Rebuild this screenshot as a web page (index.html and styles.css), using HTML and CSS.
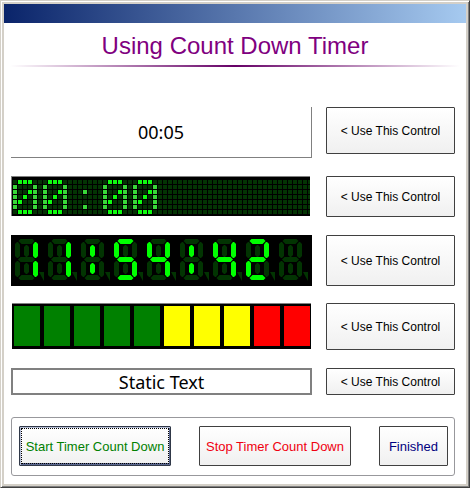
FILE: index.html
```html
<!DOCTYPE html>
<html lang="en">
<head>
  <meta charset="UTF-8">
  <meta name="viewport" content="width=device-width, initial-scale=1">
  <title>Using Count Down Timer</title>
  <link rel="stylesheet" href="styles.css">
</head>
<body>
  <div class="window">
    <div class="client">
      <div class="title-bar"></div>
      <h1>Using Count Down Timer</h1>
      <div class="rule"></div>

      <main>
        <div class="controls">
          <div class="display sunken">00:05</div>
          <button type="button" class="use use-1">&lt; Use This Control</button>

          <!-- dot matrix: 7 rows, one dot every 5px -->
          <div class="display matrix">
            <svg width="100%" height="39" role="img" aria-label="00:00">
              <defs>
                <pattern id="dots" x="1" y="3" width="5" height="5" patternUnits="userSpaceOnUse">
                  <rect width="4" height="4" fill="#033403"/>
                </pattern>
                <g id="zero">
                  <path class="dot" d="M5 2h14M5 32h14M15 12h4M10 17h4M5 22h4"/>
                  <path class="dot side" d="M0 7h4M0 12h4M0 17h4M0 22h4M0 27h4M20 7h4M20 12h4M20 17h4M20 22h4M20 27h4"/>
                </g>
              </defs>
              <rect x="1" y="3" width="100%" height="34" fill="url(#dots)"/>
              <use href="#zero" x="1" y="3"/>
              <use href="#zero" x="31" y="3"/>
              <path class="dot side" d="M71 15h4M71 30h4"/>
              <use href="#zero" x="91" y="3"/>
              <use href="#zero" x="121" y="3"/>
              <!-- gaps between the dots of the top and bottom strokes -->
              <path class="grid" d="M10.5 3v34M15.5 3v34M40.5 3v34M45.5 3v34M100.5 3v34M105.5 3v34M130.5 3v34M135.5 3v34"/>
            </svg>
          </div>
          <button type="button" class="use use-2">&lt; Use This Control</button>

          <!-- seven segment display: nine places, 33px apart -->
          <div class="display segments">
            <svg width="100%" height="51" role="img" aria-label="11:54:42">
              <defs>
                <path id="a" d="M3.5 2L5.500 0H17.500L19.500 2L16.500 5H6.500Z"/>
                <path id="b" d="M20 3H21L23 5V17L21 19H20L18 17V5.500Z"/>
                <path id="c" d="M20 22H21L23 24V36L21 38H20L18 35.500V24Z"/>
                <path id="d" d="M6.500 36H16.500L19.500 39L17.500 41H5.500L3.500 39Z"/>
                <path id="e" d="M2 22H3L5 24V35.500L3 38H2L0 36V24Z"/>
                <path id="f" d="M2 3H3L5 5.500V17L3 19H2L0 17V5Z"/>
                <path id="g" d="M3 20.500L5.500 18H17.500L20 20.500L17.500 23H5.500Z"/>
                <path id="colon" d="M9 8L11 6H12L14 8V16L12 18H11L9 16ZM9 26L11 24H12L14 26V33L12 35H11L9 33Z"/>
                <g id="off">
                  <use href="#a"/><use href="#b"/><use href="#c"/><use href="#d"/>
                  <use href="#e"/><use href="#f"/><use href="#g"/><use href="#colon"/>
                  <path d="M24 33H29V42Z"/>
                </g>
              </defs>
              <g class="unlit">
                <use href="#off" x="4" y="4"/>
                <use href="#off" x="37" y="4"/>
                <use href="#off" x="70" y="4"/>
                <use href="#off" x="103" y="4"/>
                <use href="#off" x="136" y="4"/>
                <use href="#off" x="169" y="4"/>
                <use href="#off" x="202" y="4"/>
                <use href="#off" x="235" y="4"/>
                <use href="#off" x="268" y="4"/>
              </g>
              <g class="lit">
                <g transform="translate(4 4)"><use href="#b"/><use href="#c"/></g>
                <g transform="translate(37 4)"><use href="#b"/><use href="#c"/></g>
                <use href="#colon" x="70" y="4"/>
                <g transform="translate(103 4)"><use href="#a"/><use href="#f"/><use href="#g"/><use href="#c"/><use href="#d"/></g>
                <g transform="translate(136 4)"><use href="#f"/><use href="#g"/><use href="#b"/><use href="#c"/></g>
                <use href="#colon" x="169" y="4"/>
                <g transform="translate(202 4)"><use href="#f"/><use href="#g"/><use href="#b"/><use href="#c"/></g>
                <g transform="translate(235 4)"><use href="#a"/><use href="#b"/><use href="#g"/><use href="#e"/><use href="#d"/></g>
              </g>
            </svg>
          </div>
          <button type="button" class="use use-3">&lt; Use This Control</button>

          <div class="display meter">
            <span class="green"></span>
            <span class="green"></span>
            <span class="green"></span>
            <span class="green"></span>
            <span class="green"></span>
            <span class="yellow"></span>
            <span class="yellow"></span>
            <span class="yellow"></span>
            <span class="red"></span>
            <span class="red"></span>
          </div>
          <button type="button" class="use use-1">&lt; Use This Control</button>

          <div class="display static">Static Text</div>
          <button type="button" class="use use-5">&lt; Use This Control</button>
        </div>

        <div class="actions">
          <button type="button" class="action start">Start Timer Count Down</button>
          <button type="button" class="action stop">Stop Timer Count Down</button>
          <button type="button" class="action finished">Finished</button>
        </div>
      </main>
    </div>
  </div>
</body>
</html>
```

FILE: styles.css
```css
* {
  box-sizing: border-box;
}

body {
  margin: 0;
  font-family: "Liberation Sans", Arial, sans-serif;
  color: #000;
}

/* raised window frame */
.window {
  display: flex;
  min-height: 100vh;
  padding: 3px;
  background: #d4d0c8;
  border: 1px solid #d4d0c8;
  border-right-color: #404040;
  border-bottom-color: #404040;
  box-shadow: inset 1px 1px #fff, inset -1px -1px #808080;
}

.client {
  flex: 1;
  background: #fff;
}

.title-bar {
  height: 19px;
  background: linear-gradient(to right, #0a246a, #a6caf0);
}

h1 {
  margin: 0;
  padding-top: 4px;
  font-size: 24px;
  font-weight: normal;
  line-height: 38px;
  text-align: center;
  color: #800080;
}

.rule {
  height: 2px;
  margin: 0 6px;
  background: linear-gradient(to right, #fff, #660066, #fff);
}

main {
  padding: 40px 11px 8px 7px;
}

.controls {
  display: grid;
  grid-template-columns: 1fr 129px;
  grid-template-rows: 52px 42px 51px 48px 27px;
  gap: 17px 14px;
  align-items: start;
}

.display {
  overflow: hidden;
}

.display svg {
  display: block;
}

.sunken,
.static {
  font-family: "Noto Sans", Tahoma, sans-serif;
  font-size: 18px;
  text-align: center;
}

.sunken {
  height: 51px;
  line-height: 50px;
  border-right: 1px solid #808080;
  border-bottom: 1px solid #808080;
}

.matrix {
  height: 40px;
  margin-right: 2px;
  background: #000;
  border-top: 1px solid #808080;
  border-left: 1px solid #808080;
}

.dot {
  stroke: #10fb10;
  stroke-width: 4;
}

.side {
  stroke: #38d838;
}

.grid {
  stroke: #000;
  stroke-width: 1;
}

.segments {
  height: 51px;
  background: #000;
}

.unlit {
  fill: #023402;
}

.lit {
  fill: #0f0;
}

.meter {
  display: flex;
  gap: 4px;
  height: 46px;
  margin: 0 1px;
  padding: 2px 1px 3px 2px;
  background: #000;
  border-top: 1px solid #808080;
}

.meter span {
  flex: 1;
}

.green {
  background: #008000;
}

.yellow {
  background: #ff0;
}

.red {
  background: #f00;
}

.static {
  height: 27px;
  line-height: 24px;
  border: 2px solid #808080;
}

button {
  padding: 0;
  font-family: inherit;
  background: linear-gradient(#fff, #f0f0f0);
  border: 1px solid #404040;
  border-radius: 1px;
}

.use {
  font-size: 12px;
  color: #000;
}

.use-1 {
  height: 47px;
}

.use-2 {
  height: 41px;
}

.use-3 {
  height: 51px;
}

.use-5 {
  height: 27px;
}

.actions {
  display: flex;
  justify-content: space-between;
  margin-top: 22px;
  padding: 8px 6px 9px 7px;
  border: 1px solid #98989c;
  border-radius: 3px;
}

.action {
  width: 152px;
  height: 40px;
  font-size: 13px;
}

/* default button, drawn with its focus rectangle */
.start {
  color: #008000;
  border-color: #303848;
  box-shadow: inset 1px 1px #b4bcd4, inset -1px -2px #5c6890;
  outline: 1px dotted #000;
  outline-offset: -3px;
}

.stop {
  color: #f00010;
}

.finished {
  width: 69px;
  color: #000080;
}
```
